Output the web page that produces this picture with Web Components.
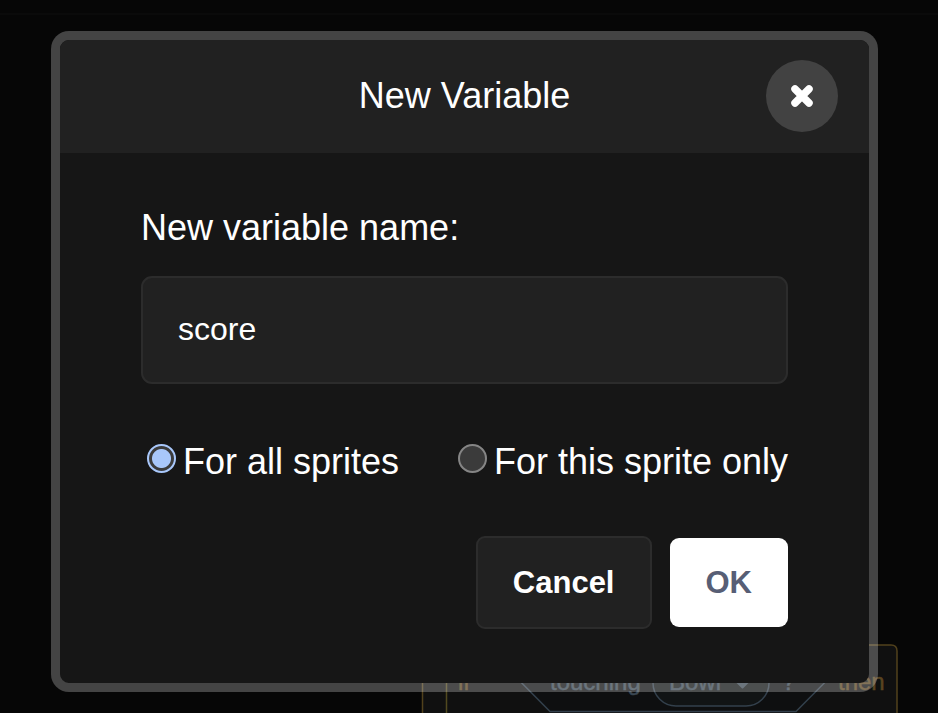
<!DOCTYPE html>
<html lang="en">
<head>
<meta charset="utf-8">
<title>New Variable</title>
<style>
html, body { height: 100%; }
body { margin: 0; background: #060606; color: #fff; font-family: "Liberation Sans", Arial, sans-serif; overflow: hidden; }
</style>
</head>
<body>
<editor-page>
  <block-canvas slot="canvas"></block-canvas>
  <modal-dialog heading="New Variable">
    <text-field label="New variable name:" value="score"></text-field>
    <scope-options></scope-options>
    <dialog-actions></dialog-actions>
  </modal-dialog>
</editor-page>
<script>
function define(name, html, setup) {
  const template = document.createElement('template');
  template.innerHTML = html;
  customElements.define(name, class extends HTMLElement {
    constructor() {
      super();
      this.attachShadow({ mode: 'open' }).append(template.content.cloneNode(true));
    }
    connectedCallback() { if (setup) setup(this, this.shadowRoot); }
  });
}

define('editor-page', `
<style>
:host { display: block; position: relative; min-height: 100%; box-sizing: border-box; padding: 31px 60px 21px 51px; }
.bar { position: absolute; inset: 0 0 auto 0; height: 13px; border-bottom: 2px solid #0a0a0a; }
</style>
<div class="bar"></div>
<slot name="canvas"></slot>
<slot></slot>`);

define('block-canvas', `
<style>
:host { display: block; position: absolute; left: 420px; top: 640px; overflow: hidden; }
svg { display: block; }
text { font: 24px "Liberation Sans", Arial, sans-serif; }
</style>
<svg width="500" height="73" viewBox="420 640 500 73" aria-hidden="true">
  <path d="M422.500 720V645H891Q897 645 897 651V720Z" fill="#101010" stroke="#51411c" stroke-width="1.500"/>
  <path d="M446.500 720V645" stroke="#51491f" stroke-width="1.500"/>
  <path d="M484 645L550 711.500H796L862 645" fill="#0e0f10" stroke="#33404c" stroke-width="1.500"/>
  <rect x="653" y="660" width="116" height="46" rx="23" fill="#111415" stroke="#33404c" stroke-width="1.500"/>
  <g fill="#3b4853" stroke="#3b4853" stroke-width=".5">
    <text x="550" y="690">touching</text>
    <text x="669" y="690">Bowl</text>
    <text x="782" y="690">?</text>
    <path d="M736 681H749L742.500 687.500Z" stroke-width="2" stroke-linejoin="round"/>
  </g>
  <g fill="#5a4420" stroke="#5a4420" stroke-width=".5">
    <text x="458" y="690">if</text>
    <text x="838" y="690">then</text>
  </g>
</svg>`);

define('modal-dialog', `
<style>
:host { display: block; position: relative; }
section { border: 9px solid rgba(255,255,255,.25); border-radius: 18px; background: #161616; background-clip: padding-box; }
header { display: grid; grid-template-columns: 72px 1fr 72px; align-items: center; height: 113px; padding: 0 31px 2px; box-sizing: border-box; background: #212121; border-radius: 9px 9px 0 0; }
h1 { grid-column: 2; margin: 0; font-size: 36px; line-height: 42px; font-weight: 400; text-align: center; }
button { width: 72px; height: 72px; padding: 0; border: 0; border-radius: 50%; background: #424242; display: grid; place-items: center; }
.body { padding: 54px 81px; }
</style>
<section role="dialog" aria-labelledby="title">
  <header>
    <h1 id="title"></h1>
    <button type="button" aria-label="Close">
      <svg width="24" height="24" viewBox="0 0 24 24"><path d="M5 5L19 19M19 5L5 19" stroke="#fff" stroke-width="7.500" stroke-linecap="round"/></svg>
    </button>
  </header>
  <div class="body"><slot></slot></div>
</section>`, (host, root) => {
  root.querySelector('h1').textContent = host.getAttribute('heading');
});

define('text-field', `
<style>
:host { display: block; }
label { display: block; font-size: 36px; line-height: 42px; margin-bottom: 27px; }
input { display: block; width: 100%; height: 108px; box-sizing: border-box; padding: 0 35px 2px; border: 2px solid #2c2c2c; border-radius: 11px; background: #212121; color: #fff; font: 32px "Liberation Sans", Arial, sans-serif; outline: 0; }
</style>
<label for="field"></label>
<input id="field" type="text">`, (host, root) => {
  root.querySelector('label').textContent = host.getAttribute('label');
  root.querySelector('input').value = host.getAttribute('value');
});

define('scope-options', `
<style>
:host { display: flex; justify-content: space-between; padding-left: 6px; margin: 57px 0 53px; }
label { display: flex; align-items: flex-start; gap: 7px; font-size: 36px; line-height: 42px; white-space: nowrap; }
input { appearance: none; flex: none; width: 29px; height: 29px; margin: 3px 0 0; border: 2px solid #858585; border-radius: 50%; background: #3b3b3b; }
input:checked { border-color: #a8c7fa; background: radial-gradient(circle, #a8c7fa 9px, #3b3b3b 10px); }
</style>
<label><input type="radio" name="scope" checked>For all sprites</label>
<label><input type="radio" name="scope">For this sprite only</label>`);

define('dialog-actions', `
<style>
:host { display: flex; justify-content: flex-end; align-items: center; gap: 18px; }
button { padding: 27px 36px; border: 0; border-radius: 9px; background: #fff; color: #575e75; font: bold 31px/35px "Liberation Sans", Arial, sans-serif; }
.cancel { padding: 27px 35px; border: 2px solid #2c2c2c; background: #212121; color: #fff; }
</style>
<button type="button" class="cancel">Cancel</button>
<button type="button">OK</button>`);
</script>
</body>
</html>
